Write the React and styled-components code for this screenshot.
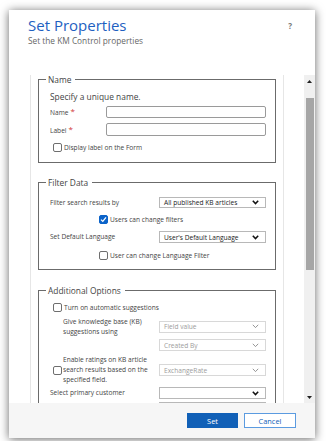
import React from 'react';
import styled, { createGlobalStyle } from 'styled-components';

const GlobalStyle = createGlobalStyle`
  html, body { margin: 0; padding: 0; background: #fff; }
  body { font-family: "Open Sans", "Noto Sans", sans-serif; color: #333; }
  * { box-sizing: border-box; }
`;

const Page = styled.div`
  width: 326px;
  height: 441px;
  padding: 10px 0 0 9px;
  overflow: hidden;
`;

const Dialog = styled.div`
  width: 306px;
  height: 428px;
  background: #fff;
  box-shadow: 0 1px 9px rgba(0, 0, 0, 0.6);
  display: flex;
  flex-direction: column;
`;

const Header = styled.header`
  height: 65px;
  flex: none;
  display: flex;
  justify-content: space-between;
  align-items: flex-start;
  padding: 5px 23px 0 19px;
`;

const Title = styled.h1`
  margin: 0;
  font-weight: 400;
  font-size: 15px;
  line-height: 20px;
  color: #1e5fc1;
`;

const Subtitle = styled.p`
  margin: 0;
  font-size: 8.3px;
  line-height: 11px;
  color: #666;
`;

const Help = styled.span`
  margin-top: 6px;
  font-size: 8px;
  line-height: 10px;
  font-weight: 700;
  color: #777;
`;

const Body = styled.div`
  flex: 1;
  display: flex;
  min-height: 0;
`;

const PanelArea = styled.div`
  flex: 1;
  padding: 0 20px 0 21px;
  overflow: hidden;
`;

const Panel = styled.div`
  height: 100%;
  border-left: 1px solid #e6e6e6;
  border-right: 1px solid #e6e6e6;
  padding: 0 7px;
  overflow: hidden;
`;

const Group = styled.fieldset`
  margin: 0 0 ${(p) => p.$mb}px;
  border: 1px solid #6b6b6b;
  padding: ${(p) => p.$pt}px 9px ${(p) => p.$pb}px 11px;
  min-width: 0;
`;

const Legend = styled.legend`
  font-size: 8.4px;
  line-height: 9px;
  color: #444;
  padding: 0 4px 0 2px;
  margin-left: -4px;
`;

const Intro = styled.p`
  margin: 0;
  font-size: 8.4px;
  line-height: 10px;
  color: #444;
`;

const Row = styled.div`
  display: flex;
  align-items: center;
  margin-top: ${(p) => p.$mt || 0}px;
  padding-left: ${(p) => p.$indent || 0}px;
`;

const Label = styled.label`
  width: ${(p) => p.$w}px;
  flex: none;
  font-size: 6.6px;
  line-height: ${(p) => p.$lh || 9.5}px;
  padding-left: ${(p) => p.$pl || 0}px;
  color: #444;
`;

const Req = styled.span`
  color: #d13438;
  margin-left: 2px;
  font-size: 8px;
  vertical-align: 1px;
`;

const TextInput = styled.input`
  width: ${(p) => p.$w}px;
  height: ${(p) => p.$h}px;
  border: 1px solid #9a9a9a;
  border-radius: 2px;
  padding: 0 3px;
  margin: 0;
  font: inherit;
  font-size: 6.6px;
  background: #fff;
  outline: none;
`;

const SelectBox = styled.div`
  width: 107px;
  height: ${(p) => p.$h || 12}px;
  flex: none;
  border: 1px solid ${(p) => (p.$disabled ? '#d8d8d8' : '#b8b8b8')};
  display: flex;
  align-items: center;
  justify-content: space-between;
  padding: 0 6px 0 4px;
  font-size: 6.6px;
  color: ${(p) => (p.$disabled ? '#9c9c9c' : '#222')};
  background: #fff;
  white-space: nowrap;
`;

const CheckRow = styled.label`
  display: flex;
  align-items: center;
  gap: 2px;
  margin-top: ${(p) => p.$mt || 0}px;
  padding-left: ${(p) => p.$indent || 0}px;
  font-size: 6.6px;
  line-height: 9px;
  color: #444;
`;

const Box = styled.span`
  width: 9px;
  height: 9px;
  flex: none;
  border: 1px solid ${(p) => (p.$checked ? '#0b63c9' : '#6e6e6e')};
  background: ${(p) => (p.$checked ? '#0b63c9' : '#fff')};
  border-radius: 2px;
  display: inline-flex;
  align-items: center;
  justify-content: center;
`;

const Scrollbar = styled.div`
  width: 11px;
  flex: none;
  background: #f0f0f0;
  display: flex;
  flex-direction: column;
`;

const Arrow = styled.div`
  height: 12px;
  flex: none;
  display: flex;
  align-items: center;
  justify-content: center;
`;

const Thumb = styled.div`
  width: 8px;
  height: 172px;
  margin: 11px 0 0 2px;
  background: #a6a6a6;
`;

const Fill = styled.div`
  flex: 1;
`;

const Footer = styled.footer`
  height: 35px;
  flex: none;
  background: #f6f6f6;
  display: flex;
  align-items: center;
  justify-content: flex-end;
  gap: 6px;
  padding-right: 19px;
`;

const Button = styled.button`
  width: ${(p) => p.$w}px;
  height: 15px;
  margin: 0;
  padding: 0;
  font-family: inherit;
  font-size: 7.4px;
  border: 1px solid ${(p) => (p.$primary ? '#1160b7' : '#5b9be0')};
  background: ${(p) => (p.$primary ? '#1160b7' : '#fff')};
  color: ${(p) => (p.$primary ? '#fff' : '#1160b7')};
`;

const Chevron = ({ disabled }) => (
  <svg width="7" height="5" viewBox="0 0 7 5">
    <polyline
      points="0.8,0.8 3.5,3.6 6.2,0.8"
      fill="none"
      stroke={disabled ? '#8a8a8a' : '#111'}
      strokeWidth={disabled ? 0.9 : 1.5}
    />
  </svg>
);

const Check = () => (
  <svg width="7" height="7" viewBox="0 0 7 7">
    <polyline points="1,3.6 2.8,5.4 6,1.4" fill="none" stroke="#fff" strokeWidth="1.3" />
  </svg>
);

const Tri = ({ down }) => (
  <svg width="5" height="3" viewBox="0 0 5 3">
    <polygon points={down ? '0,0 5,0 2.5,3' : '0,3 5,3 2.5,0'} fill="#222" />
  </svg>
);

const Select = ({ value, disabled, h }) => (
  <SelectBox $disabled={disabled} $h={h}>
    <span>{value}</span>
    <Chevron disabled={disabled} />
  </SelectBox>
);

const CheckBox = ({ checked }) => <Box $checked={checked}>{checked && <Check />}</Box>;

export default function App() {
  return (
    <>
      <GlobalStyle />
      <Page>
        <Dialog>
          <Header>
            <div>
              <Title>Set Properties</Title>
              <Subtitle>Set the KM Control properties</Subtitle>
            </div>
            <Help>?</Help>
          </Header>
          <Body>
            <PanelArea>
              <Panel>
                <Group $mb={15} $pt={8} $pb={10}>
                  <Legend>Name</Legend>
                  <Intro>Specify a unique name.</Intro>
                  <Row $mt={4}>
                    <Label $w={56}>
                      Name<Req>*</Req>
                    </Label>
                    <TextInput $w={160} $h={12} />
                  </Row>
                  <Row $mt={5}>
                    <Label $w={56}>
                      Label<Req>*</Req>
                    </Label>
                    <TextInput $w={164} $h={13} />
                  </Row>
                  <CheckRow $mt={7} $indent={3}>
                    <CheckBox />
                    Display label on the Form
                  </CheckRow>
                </Group>

                <Group $mb={16} $pt={10} $pb={9}>
                  <Legend>Filter Data</Legend>
                  <Row>
                    <Label $w={109}>Filter search results by</Label>
                    <Select value="All published KB articles" h={11} />
                  </Row>
                  <CheckRow $mt={7} $indent={49}>
                    <CheckBox checked />
                    Users can change filters
                  </CheckRow>
                  <Row $mt={7}>
                    <Label $w={109}>Set Default Language</Label>
                    <Select value="User's Default Language" h={12} />
                  </Row>
                  <CheckRow $mt={8} $indent={49}>
                    <CheckBox />
                    User can change Language Filter
                  </CheckRow>
                </Group>

                <Group $mb={0} $pt={8} $pb={10}>
                  <Legend>Additional Options</Legend>
                  <CheckRow $indent={3}>
                    <CheckBox />
                    Turn on automatic suggestions
                  </CheckRow>
                  <Row $mt={5} $indent={13}>
                    <Label $w={96}>
                      Give knowledge base (KB)
                      <br />
                      suggestions using
                    </Label>
                    <Select value="Field value" disabled />
                  </Row>
                  <Row $mt={3} $indent={109}>
                    <Select value="Created By" disabled />
                  </Row>
                  <Row $mt={4} $indent={3}>
                    <CheckBox />
                    <Label $w={97} $lh={10} $pl={1}>
                      Enable ratings on KB article
                      <br />
                      search results based on the
                      <br />
                      specified field.
                    </Label>
                    <Select value="ExchangeRate" disabled />
                  </Row>
                  <Row $mt={2}>
                    <Label $w={109}>Select primary customer</Label>
                    <Select value="" />
                  </Row>
                  <Row $mt={3} $indent={109}>
                    <Select value="" />
                  </Row>
                </Group>
              </Panel>
            </PanelArea>
            <Scrollbar>
              <Arrow>
                <Tri />
              </Arrow>
              <Thumb />
              <Fill />
              <Arrow>
                <Tri down />
              </Arrow>
            </Scrollbar>
          </Body>
          <Footer>
            <Button $primary $w={51}>
              Set
            </Button>
            <Button $w={52}>Cancel</Button>
          </Footer>
        </Dialog>
      </Page>
    </>
  );
}
